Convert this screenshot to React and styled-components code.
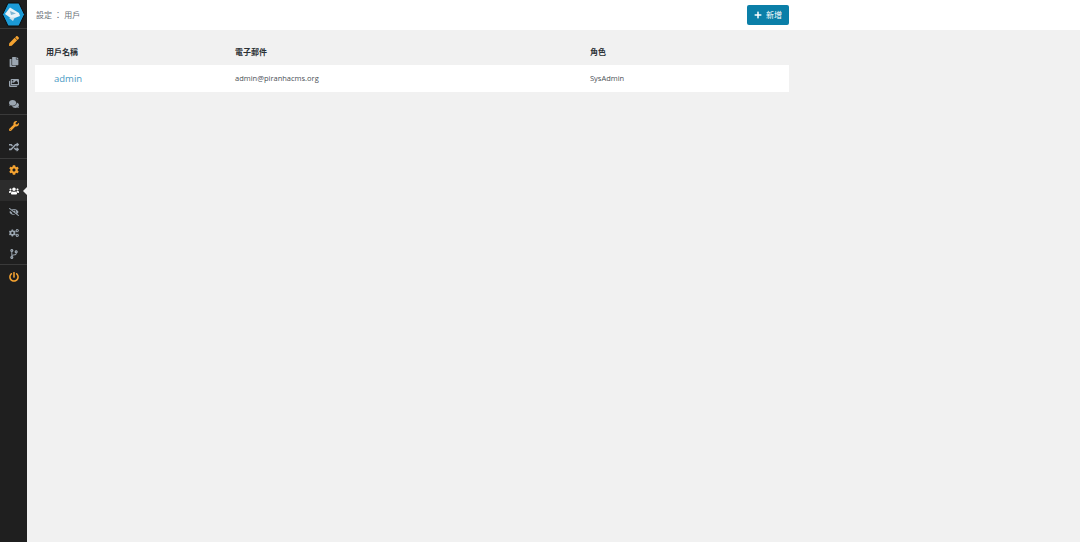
import React from 'react';
import styled, { createGlobalStyle } from 'styled-components';
import {
  FaPen, FaCopy, FaImages, FaComments, FaWrench, FaRandom, FaCog,
  FaUsers, FaEyeSlash, FaCogs, FaCodeBranch, FaPowerOff, FaPlus,
} from 'react-icons/fa';

const GlobalStyle = createGlobalStyle`
  html, body {
    margin: 0;
    height: 100%;
    background: #f1f1f1;
    font-family: "Open Sans", "Noto Sans CJK TC", sans-serif;
    color: #343a40;
  }
  #root { height: 100%; }
`;

const Page = styled.div`
  display: flex;
  height: 542px;
  overflow: hidden;
`;

const Sidebar = styled.nav`
  width: 27px;
  flex: none;
  background: #1f1f1f;
`;

const LogoBox = styled.div`
  height: 28px;
  display: flex;
  align-items: center;
  justify-content: center;
  border-bottom: 1px solid #3a3a3a;
`;

const MenuGroup = styled.ul`
  list-style: none;
  margin: 0;
  padding: ${(p) => p.$pad};
  border-bottom: ${(p) => (p.$last ? 'none' : '1px solid #3a3a3a')};
`;

const MenuItem = styled.li`
  position: relative;
  height: 21px;
  display: flex;
  align-items: center;
  justify-content: center;
  color: ${(p) => (p.$active ? '#fff' : p.$accent ? '#f5a331' : '#9ba6b1')};
  background: ${(p) => (p.$active ? '#2c2c2c' : 'transparent')};

  svg {
    height: 10px;
    width: auto;
  }

  ${(p) => p.$active && `
    &::after {
      content: '';
      position: absolute;
      right: 0;
      top: 50%;
      margin-top: -4px;
      border: 4px solid transparent;
      border-right-color: #f1f1f1;
      border-left-width: 0;
    }
  `}
`;

const Main = styled.main`
  flex: 1;
  min-width: 0;
`;

const TopBar = styled.header`
  height: 30px;
  background: #fff;
`;

const Container = styled.div`
  width: 754px;
  margin-left: 8px;
`;

const TopRow = styled(Container)`
  height: 30px;
  display: flex;
  align-items: center;
  justify-content: space-between;
`;

const Breadcrumb = styled.div`
  font-size: 8px;
  color: #6a7077;
  padding-left: 1px;
  padding-bottom: 1px;
`;

const AddButton = styled.button`
  height: 20px;
  width: 42px;
  margin-bottom: 1px;
  padding: 0;
  border: none;
  border-radius: 2px;
  background: #0b7fa8;
  color: #fff;
  font-family: inherit;
  font-size: 8px;
  display: flex;
  align-items: center;
  justify-content: center;
  gap: 4px;
`;

const Grid = styled.div`
  display: grid;
  grid-template-columns: 189px 355px 1fr;
  align-items: center;
`;

const HeadRow = styled(Grid)`
  height: 28px;
  padding-top: 7px;
  font-size: 8px;
  font-weight: 700;
  color: #2b3035;
`;

const BodyRow = styled(Grid)`
  height: 26px;
  padding-bottom: 1px;
  background: #fff;
  font-size: 7.5px;
  color: #4a5056;
`;

const Cell = styled.div`
  padding-left: 11px;
`;

const UserLink = styled.a`
  font-size: 9.5px;
  color: #4a9ac4;
  padding-left: 8px;
`;

const Logo = () => (
  <svg width="23" height="25" viewBox="0 0 23 25">
    <polygon points="6,1 17,1 22.5,12.5 17,24 6,24 0.5,12.5" fill="#1b9ad6" stroke="#0c0c0c" strokeWidth="1" />
    <polygon points="3,12 8,5.5 17,11 18,14 10,17" fill="#eaf3f7" />
    <polygon points="8,9 14,11.5 9,13" fill="#7fb6d2" />
    <polygon points="7,16 13,15 11,19" fill="#cfe2ea" />
  </svg>
);

const groups = [
  {
    pad: '1px 0 0',
    items: [
      { icon: FaPen, accent: true },
      { icon: FaCopy },
      { icon: FaImages },
      { icon: FaComments },
    ],
  },
  {
    pad: '0 0 1px',
    items: [
      { icon: FaWrench, accent: true },
      { icon: FaRandom },
    ],
  },
  {
    pad: '0',
    items: [
      { icon: FaCog, accent: true },
      { icon: FaUsers, active: true },
      { icon: FaEyeSlash },
      { icon: FaCogs },
      { icon: FaCodeBranch },
    ],
  },
  {
    pad: '1px 0 0',
    items: [
      { icon: FaPowerOff, accent: true },
    ],
  },
];

const App = () => (
  <Page>
    <GlobalStyle />
    <Sidebar>
      <LogoBox>
        <Logo />
      </LogoBox>
      {groups.map(({ pad, items }, i) => (
        <MenuGroup key={i} $pad={pad} $last={i === groups.length - 1}>
          {items.map(({ icon: Icon, accent, active }, j) => (
            <MenuItem key={j} $accent={accent} $active={active}>
              <Icon />
            </MenuItem>
          ))}
        </MenuGroup>
      ))}
    </Sidebar>
    <Main>
      <TopBar>
        <TopRow>
          <Breadcrumb>設定 ： 用戶</Breadcrumb>
          <AddButton>
            <FaPlus size={8} />
            新增
          </AddButton>
        </TopRow>
      </TopBar>
      <Container>
        <HeadRow>
          <Cell>用戶名稱</Cell>
          <Cell>電子郵件</Cell>
          <Cell>角色</Cell>
        </HeadRow>
        <BodyRow>
          <Cell><UserLink>admin</UserLink></Cell>
          <Cell>admin@piranhacms.org</Cell>
          <Cell>SysAdmin</Cell>
        </BodyRow>
      </Container>
    </Main>
  </Page>
);

export default App;
